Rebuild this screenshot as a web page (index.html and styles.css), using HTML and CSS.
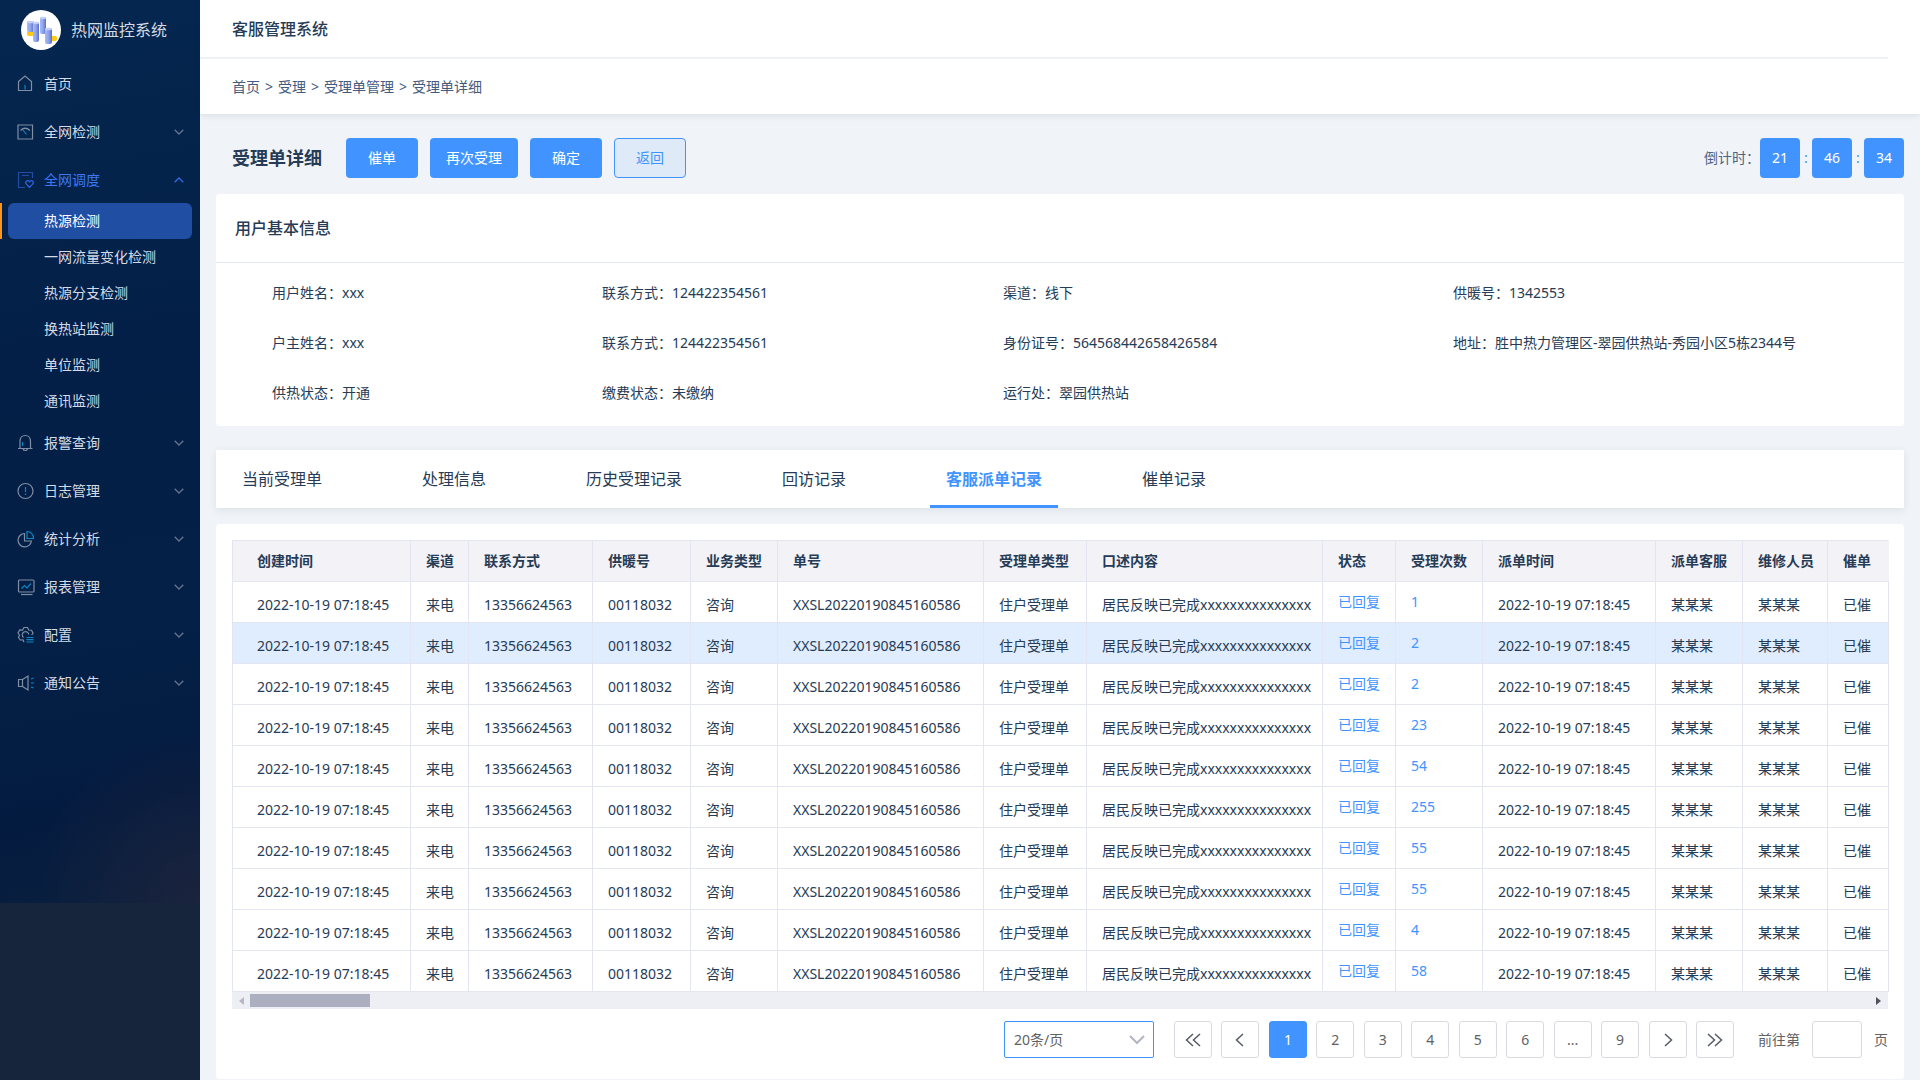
FILE: index.html
```html
<!DOCTYPE html>
<html lang="zh-CN">
<head>
<meta charset="utf-8">
<meta name="viewport" content="width=device-width, initial-scale=1">
<title>客服管理系统 - 受理单详细</title>
<link rel="stylesheet" href="styles.css">
</head>
<body>
<svg class="defs" aria-hidden="true">
  <symbol id="chevron" viewBox="0 0 10 6"><path d="M.7.7 5 5 9.3.7"/></symbol>
</svg>
<div class="app">
  <aside class="sidebar">
    <div class="sidebar-inner">
      <div class="brand">
        <svg class="brand-logo" viewBox="0 0 40 40" aria-hidden="true">
          <defs>
            <linearGradient id="bar" x1="0" x2="1" y1="0" y2="0">
              <stop offset="0" stop-color="#a9bcf6"/><stop offset=".5" stop-color="#8ea3ec"/><stop offset="1" stop-color="#5c70c4"/>
            </linearGradient>
          </defs>
          <circle cx="20" cy="20" r="20" fill="#fff"/>
          <rect x="6" y="21" width="7" height="5" rx="2" fill="#ffc812"/>
          <rect x="29" y="26" width="7" height="5" rx="2" fill="#ffc812"/>
          <rect x="6" y="11" width="7" height="11" rx="2" fill="url(#bar)"/>
          <rect x="12" y="12" width="6" height="20" rx="2" fill="url(#bar)"/>
          <rect x="19" y="7" width="6" height="17" rx="2" fill="url(#bar)"/>
          <rect x="24" y="18" width="7" height="16" rx="2" fill="url(#bar)"/>
          <g fill="#c3d0fb"><ellipse cx="9.500" cy="12" rx="3.500" ry="1.300"/><ellipse cx="15" cy="13" rx="3" ry="1.300"/><ellipse cx="22" cy="8" rx="3" ry="1.300"/><ellipse cx="27.500" cy="19" rx="3.500" ry="1.300"/></g>
        </svg>
        <span>热网监控系统</span>
      </div>
      <nav class="menu" aria-label="主菜单">
        <a class="menu-item" href="#home">
          <svg class="icon" viewBox="0 0 18 18"><path d="M1.500 6.500 8 1l6.500 5.500v9h-13z"/><path class="accent" d="M8 10v4.500"/></svg>
          <span>首页</span>
        </a>
        <button class="menu-item" type="button" aria-expanded="false">
          <svg class="icon" viewBox="0 0 18 18"><path d="M1 2h14.500v14H1z"/><path d="M3.500 7.500Q8 3 13 7.500"/><path class="accent" d="m6 7 3.500 4.500"/></svg>
          <span>全网检测</span><svg class="chevron"><use href="#chevron"/></svg>
        </button>
        <button class="menu-item open" type="button" aria-expanded="true">
          <svg class="icon" viewBox="0 0 18 18"><path d="M8 16.500H1.500V1.500h14V7M5 4.500h7"/><path class="accent" d="M12.500 16.500 9.200 13c-1.600-2.500 1.600-4.500 3.300-2.200 1.700-2.300 4.900-.3 3.300 2.200z"/></svg>
          <span>全网调度</span><svg class="chevron"><use href="#chevron"/></svg>
        </button>
        <ul class="submenu">
          <li class="current"><a href="#s1" aria-current="page">热源检测</a></li>
          <li><a href="#s2">一网流量变化检测</a></li>
          <li><a href="#s3">热源分支检测</a></li>
          <li><a href="#s4">换热站监测</a></li>
          <li><a href="#s5">单位监测</a></li>
          <li><a href="#s6">通讯监测</a></li>
        </ul>
        <button class="menu-item" type="button" aria-expanded="false">
          <svg class="icon" viewBox="0 0 18 18"><path d="M1 14.500h14.500M3 14.500V7.500C3 3.500 5.500 1.500 8.200 1.500s5.300 2 5.300 6v7M6 15c.5 2 4 2 4.500 0"/><path class="accent" d="M5.500 8v4"/></svg>
          <span>报警查询</span><svg class="chevron"><use href="#chevron"/></svg>
        </button>
        <button class="menu-item" type="button" aria-expanded="false">
          <svg class="icon" viewBox="0 0 18 18"><circle cx="8.500" cy="9" r="7.500"/><path class="accent" d="M8.500 5v5M8.500 11.500V13"/></svg>
          <span>日志管理</span><svg class="chevron"><use href="#chevron"/></svg>
        </button>
        <button class="menu-item" type="button" aria-expanded="false">
          <svg class="icon" viewBox="0 0 18 18"><path d="M7.500 3.500a6.700 6.700 0 1 0 6.900 7.500H7.500z"/><path class="accent" d="M10 1.500v7h6.500a6.500 6.500 0 0 0-6.500-7z"/></svg>
          <span>统计分析</span><svg class="chevron"><use href="#chevron"/></svg>
        </button>
        <button class="menu-item" type="button" aria-expanded="false">
          <svg class="icon" viewBox="0 0 18 18"><rect x="1.500" y="2" width="15.500" height="12" rx="1"/><path d="M4 16.500h11.500"/><path class="accent" d="m4.500 10.500 3-3 2.500 2.500L14 5.500"/></svg>
          <span>报表管理</span><svg class="chevron"><use href="#chevron"/></svg>
        </button>
        <button class="menu-item" type="button" aria-expanded="false">
          <svg class="icon" viewBox="0 0 18 18"><path d="M7 16.200 6 13.800 3.200 14 1.500 11.500 2.500 9 1 7l1.700-3 2.800.2L7 1.500h3.500L11.700 4l2.800.2L16 7l-1.300 2"/><path d="M6.500 11.500a3.300 3.300 0 1 1 5.300-3"/><path class="accent" d="M9.500 11.500h7M9.500 13.700h7M9.500 16h7"/></svg>
          <span>配置</span><svg class="chevron"><use href="#chevron"/></svg>
        </button>
        <button class="menu-item" type="button" aria-expanded="false">
          <svg class="icon" viewBox="0 0 18 18"><path d="M1.500 5.500h4v7h-4zM5.500 5.500 11 2v14l-5.500-3.500"/><path class="accent" d="m14 5 2.500-1M14 9h3M14 13l2.500 1"/></svg>
          <span>通知公告</span><svg class="chevron"><use href="#chevron"/></svg>
        </button>
      </nav>
    </div>
  </aside>

  <div class="main">
    <header class="topbar">
      <div class="system-name">客服管理系统</div>
      <nav class="breadcrumb" aria-label="当前位置">
        <a href="#home">首页</a><span>&gt;</span><a href="#accept">受理</a><span>&gt;</span><a href="#manage">受理单管理</a><span>&gt;</span><a href="#detail">受理单详细</a>
      </nav>
    </header>

    <main class="content">
      <div class="page-head">
        <h1>受理单详细</h1>
        <div class="actions">
          <button class="btn" type="button">催单</button>
          <button class="btn" type="button">再次受理</button>
          <button class="btn" type="button">确定</button>
          <button class="btn btn-plain" type="button">返回</button>
        </div>
        <div class="countdown">
          <span class="countdown-label">倒计时：</span>
          <b>21</b><i>:</i><b>46</b><i>:</i><b>34</b>
        </div>
      </div>

      <section class="card">
        <h2 class="card-title">用户基本信息</h2>
        <div class="info">
          <div>用户姓名：xxx</div><div>联系方式：124422354561</div><div>渠道：线下</div><div>供暖号：1342553</div>
          <div>户主姓名：xxx</div><div>联系方式：124422354561</div><div>身份证号：564568442658426584</div><div>地址：胜中热力管理区-翠园供热站-秀园小区5栋2344号</div>
          <div>供热状态：开通</div><div>缴费状态：未缴纳</div><div>运行处：翠园供热站</div>
        </div>
      </section>

      <nav class="tabs" aria-label="记录类型">
        <a href="#t1">当前受理单</a>
        <a href="#t2">处理信息</a>
        <a href="#t3">历史受理记录</a>
        <a href="#t4">回访记录</a>
        <a class="active" href="#t5" aria-current="true">客服派单记录</a>
        <a href="#t6">催单记录</a>
      </nav>

      <section class="card records">
        <table>
          <colgroup>
            <col class="c-created"><col class="c-channel"><col class="c-phone"><col class="c-heat"><col class="c-biz"><col class="c-order"><col class="c-type"><col class="c-desc"><col class="c-status"><col class="c-count"><col class="c-sent"><col class="c-agent"><col class="c-repair"><col class="c-urge">
          </colgroup>
          <thead>
            <tr><th>创建时间</th><th>渠道</th><th>联系方式</th><th>供暖号</th><th>业务类型</th><th>单号</th><th>受理单类型</th><th>口述内容</th><th>状态</th><th>受理次数</th><th>派单时间</th><th>派单客服</th><th>维修人员</th><th>催单</th></tr>
          </thead>
          <tbody>
            <tr><td>2022-10-19 07:18:45</td><td>来电</td><td>13356624563</td><td>00118032</td><td>咨询</td><td>XXSL20220190845160586</td><td>住户受理单</td><td>居民反映已完成xxxxxxxxxxxxxxx</td><td class="link"><a href="#r1">已回复</a></td><td class="link"><a href="#n1">1</a></td><td>2022-10-19 07:18:45</td><td>某某某</td><td>某某某</td><td>已催</td></tr>
            <tr class="selected"><td>2022-10-19 07:18:45</td><td>来电</td><td>13356624563</td><td>00118032</td><td>咨询</td><td>XXSL20220190845160586</td><td>住户受理单</td><td>居民反映已完成xxxxxxxxxxxxxxx</td><td class="link"><a href="#r2">已回复</a></td><td class="link"><a href="#n2">2</a></td><td>2022-10-19 07:18:45</td><td>某某某</td><td>某某某</td><td>已催</td></tr>
            <tr><td>2022-10-19 07:18:45</td><td>来电</td><td>13356624563</td><td>00118032</td><td>咨询</td><td>XXSL20220190845160586</td><td>住户受理单</td><td>居民反映已完成xxxxxxxxxxxxxxx</td><td class="link"><a href="#r3">已回复</a></td><td class="link"><a href="#n3">2</a></td><td>2022-10-19 07:18:45</td><td>某某某</td><td>某某某</td><td>已催</td></tr>
            <tr><td>2022-10-19 07:18:45</td><td>来电</td><td>13356624563</td><td>00118032</td><td>咨询</td><td>XXSL20220190845160586</td><td>住户受理单</td><td>居民反映已完成xxxxxxxxxxxxxxx</td><td class="link"><a href="#r4">已回复</a></td><td class="link"><a href="#n4">23</a></td><td>2022-10-19 07:18:45</td><td>某某某</td><td>某某某</td><td>已催</td></tr>
            <tr><td>2022-10-19 07:18:45</td><td>来电</td><td>13356624563</td><td>00118032</td><td>咨询</td><td>XXSL20220190845160586</td><td>住户受理单</td><td>居民反映已完成xxxxxxxxxxxxxxx</td><td class="link"><a href="#r5">已回复</a></td><td class="link"><a href="#n5">54</a></td><td>2022-10-19 07:18:45</td><td>某某某</td><td>某某某</td><td>已催</td></tr>
            <tr><td>2022-10-19 07:18:45</td><td>来电</td><td>13356624563</td><td>00118032</td><td>咨询</td><td>XXSL20220190845160586</td><td>住户受理单</td><td>居民反映已完成xxxxxxxxxxxxxxx</td><td class="link"><a href="#r6">已回复</a></td><td class="link"><a href="#n6">255</a></td><td>2022-10-19 07:18:45</td><td>某某某</td><td>某某某</td><td>已催</td></tr>
            <tr><td>2022-10-19 07:18:45</td><td>来电</td><td>13356624563</td><td>00118032</td><td>咨询</td><td>XXSL20220190845160586</td><td>住户受理单</td><td>居民反映已完成xxxxxxxxxxxxxxx</td><td class="link"><a href="#r7">已回复</a></td><td class="link"><a href="#n7">55</a></td><td>2022-10-19 07:18:45</td><td>某某某</td><td>某某某</td><td>已催</td></tr>
            <tr><td>2022-10-19 07:18:45</td><td>来电</td><td>13356624563</td><td>00118032</td><td>咨询</td><td>XXSL20220190845160586</td><td>住户受理单</td><td>居民反映已完成xxxxxxxxxxxxxxx</td><td class="link"><a href="#r8">已回复</a></td><td class="link"><a href="#n8">55</a></td><td>2022-10-19 07:18:45</td><td>某某某</td><td>某某某</td><td>已催</td></tr>
            <tr><td>2022-10-19 07:18:45</td><td>来电</td><td>13356624563</td><td>00118032</td><td>咨询</td><td>XXSL20220190845160586</td><td>住户受理单</td><td>居民反映已完成xxxxxxxxxxxxxxx</td><td class="link"><a href="#r9">已回复</a></td><td class="link"><a href="#n9">4</a></td><td>2022-10-19 07:18:45</td><td>某某某</td><td>某某某</td><td>已催</td></tr>
            <tr><td>2022-10-19 07:18:45</td><td>来电</td><td>13356624563</td><td>00118032</td><td>咨询</td><td>XXSL20220190845160586</td><td>住户受理单</td><td>居民反映已完成xxxxxxxxxxxxxxx</td><td class="link"><a href="#r10">已回复</a></td><td class="link"><a href="#n10">58</a></td><td>2022-10-19 07:18:45</td><td>某某某</td><td>某某某</td><td>已催</td></tr>
          </tbody>
        </table>
        <div class="hscroll" aria-hidden="true">
          <svg viewBox="0 0 5 8"><path d="M5 0v8L0 4z" fill="#b4b8c6"/></svg>
          <div class="thumb"></div>
          <svg class="end" viewBox="0 0 5 8"><path d="M0 0v8l5-4z" fill="#4f535f"/></svg>
        </div>
        <div class="pager">
          <div class="page-size">
            <select aria-label="每页条数"><option>20条/页</option><option>50条/页</option></select>
            <svg viewBox="0 0 16 10"><path d="m1 1 7 7 7-7"/></svg>
          </div>
          <div class="pages">
            <button type="button" aria-label="首页"><svg viewBox="0 0 16 14"><path d="M8 1 1.500 7 8 13M15 1 8.500 7l6.500 6"/></svg></button>
            <button type="button" aria-label="上一页"><svg viewBox="0 0 16 14"><path d="M11 1 4.500 7l6.500 6"/></svg></button>
            <button type="button" class="on">1</button>
            <button type="button">2</button>
            <button type="button">3</button>
            <button type="button">4</button>
            <button type="button">5</button>
            <button type="button">6</button>
            <button type="button">...</button>
            <button type="button">9</button>
            <button type="button" aria-label="下一页"><svg viewBox="0 0 16 14"><path d="m5 1 6.500 6L5 13"/></svg></button>
            <button type="button" aria-label="末页"><svg viewBox="0 0 16 14"><path d="m1 1 6.500 6L1 13M8 1l6.500 6L8 13"/></svg></button>
          </div>
          <div class="jump">
            <label for="jump">前往第</label>
            <input id="jump" type="text">
            <span>页</span>
          </div>
        </div>
      </section>
    </main>
  </div>
</div>
</body>
</html>
```
FILE: styles.css
```css
* { box-sizing: border-box; }

body {
  margin: 0;
  background: #f0f4f8;
  color: #263b55;
  font: 14px/20px "Noto Sans", "Noto Sans CJK SC", sans-serif;
}

a { color: inherit; text-decoration: none; }
button, input, select { font: inherit; color: inherit; margin: 0; }
button { cursor: pointer; }
h1, h2 { margin: 0; }
.defs { display: none; }

.app { display: flex; min-height: 100vh; }

/* Sidebar */
.sidebar { flex: 0 0 200px; background: #16243c; color: #d5dbe5; }
.sidebar-inner {
  min-height: 903px;
  background:
    radial-gradient(circle at 100% 100%, #1b233d 0, rgba(24, 35, 61, 0) 170px),
    linear-gradient(170deg, #05274f 0%, #031f47 40%, #042046 70%, #041b40 88%, #081f3e 100%);
}
.brand { display: flex; align-items: center; gap: 10px; height: 60px; padding-left: 21px; font-size: 16px; }
.brand-logo { width: 40px; height: 40px; }
.menu-item {
  display: flex;
  align-items: center;
  gap: 9px;
  width: 100%;
  height: 48px;
  padding: 0 16px 0 17px;
  border: 0;
  background: none;
  text-align: left;
}
.icon { width: 18px; height: 18px; fill: none; stroke: #7f8da5; stroke-width: 1.2; }
.icon .accent { stroke: #0c86c6; }
.chevron { width: 10px; height: 6px; margin-left: auto; fill: none; stroke: #63738f; stroke-width: 1.3; }
.menu-item.open { color: #3b78f5; }
.menu-item.open .icon { stroke: #1f4da3; }
.menu-item.open .accent { stroke: #2c66de; }
.menu-item.open .chevron { stroke: #2f69e6; transform: rotate(180deg); }
.submenu { margin: -1px 0 0; padding: 0; list-style: none; }
.submenu li { padding: 0 8px; }
.submenu a { display: block; padding-left: 36px; line-height: 36px; border-radius: 6px; }
.submenu .current { padding-left: 6px; border-left: 2px solid #ff931e; }
.submenu .current a { background: #204ea3; color: #fff; }

/* Top bar */
.main { flex: 1; min-width: 0; }
.topbar { background: #fff; padding-right: 32px; box-shadow: 0 2px 6px rgba(40, 60, 90, .1); }
.system-name { height: 59px; padding-left: 32px; border-bottom: 2px solid #edf2f5; font-size: 16px; font-weight: 500; line-height: 58px; }
.breadcrumb { display: flex; gap: 5px; padding-left: 32px; line-height: 55px; color: #435b7d; }

/* Page heading */
.content { padding: 24px 16px 1px; }
.page-head { display: flex; align-items: center; height: 40px; margin-bottom: 16px; padding-left: 16px; }
.page-head h1 { font-size: 18px; font-weight: 700; }
.actions { display: flex; gap: 12px; margin-left: 24px; }
.btn { min-width: 72px; height: 40px; padding: 0 16px; border: 0; border-radius: 4px; background: #4194ff; color: #fff; }
.btn-plain { border: 1px solid #4194ff; background: #deeaf8; color: #4194ff; }
.countdown { display: flex; align-items: center; margin-left: auto; color: #4d6484; }
.countdown b { width: 40px; border-radius: 4px; background: #4194ff; color: #fff; font-weight: 400; line-height: 40px; text-align: center; }
.countdown i { width: 12px; color: #4194ff; font-style: normal; text-align: center; }

/* Cards */
.card { background: #fff; border-radius: 4px; }
.card-title { padding-left: 19px; border-bottom: 1px solid #e2eaf1; font-size: 16px; font-weight: 500; line-height: 68px; }
.info { display: grid; grid-template-columns: 330fr 401fr 450fr 451fr; padding: 5px 0 8px 56px; line-height: 50px; }

/* Tabs */
.tabs { display: flex; gap: 68px; height: 58px; margin: 24px 0 16px; padding-left: 10px; background: #fff; box-shadow: 0 2px 8px rgba(40, 60, 90, .1); font-size: 16px; line-height: 58px; }
.tabs a { padding: 0 16px; }
.tabs .active { border-bottom: 3px solid #4194ff; color: #4194ff; font-weight: 700; }

/* Records table */
.records { padding: 16px 16px 21px; }
table { width: 100%; border-collapse: collapse; table-layout: fixed; }
th, td { height: 41px; padding: 0 0 0 15px; border: 1px solid #e3e5f0; text-align: left; white-space: nowrap; }
th { background: #f2f2f7; font-weight: 700; }
td { padding-top: 5px; }
td.link { padding-top: 0; color: #4194ff; }
th:first-child, td:first-child { padding-left: 24px; }
th:last-child { border-right-color: #f2f2f7; }
.selected { background: #e0edff; }
.c-created { width: 178px; }
.c-channel { width: 58px; }
.c-phone { width: 124px; }
.c-heat { width: 98px; }
.c-biz { width: 87px; }
.c-order { width: 206px; }
.c-type { width: 103px; }
.c-desc { width: 236px; }
.c-status { width: 73px; }
.c-count { width: 87px; }
.c-sent { width: 173px; }
.c-agent { width: 87px; }
.c-repair { width: 85px; }
.c-urge { width: 61px; }
.hscroll { display: flex; align-items: center; gap: 6px; height: 17px; padding: 0 7px; background: #eeeff5; }
.hscroll svg { width: 5px; height: 8px; }
.hscroll .end { margin-left: auto; }
.thumb { width: 120px; height: 13px; background: #abafbf; }

/* Pagination */
.pager { display: flex; justify-content: flex-end; margin-top: 12px; color: #606266; }
.page-size { position: relative; width: 150px; margin-right: 20px; }
.page-size select { width: 100%; height: 37px; padding: 0 9px; border: 1px solid #4194ff; border-radius: 2px; background: #fff; appearance: none; }
.page-size svg { position: absolute; right: 9px; top: 14px; width: 16px; height: 10px; fill: none; stroke: #b2b6c2; stroke-width: 2; pointer-events: none; }
.pages { display: flex; justify-content: space-between; width: 560px; margin-right: 24px; }
.pages button { display: grid; place-items: center; width: 38px; height: 37px; padding: 0; border: 1px solid #dadbe0; border-radius: 3px; background: #fff; }
.pages .on { border-color: #4194ff; background: #4194ff; color: #fff; }
.pages svg { width: 16px; height: 14px; fill: none; stroke: #555a66; stroke-width: 1.5; }
.jump { display: flex; align-items: center; gap: 12px; }
.jump input { width: 50px; height: 37px; border: 1px solid #dadbe0; border-radius: 3px; background: #fff; }
```
